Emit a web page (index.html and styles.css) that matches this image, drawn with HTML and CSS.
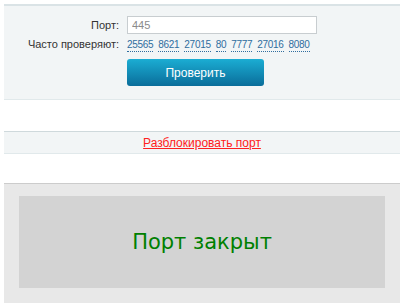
FILE: index.html
```html
<!DOCTYPE html>
<html>
<head>
<meta charset="utf-8">
<link rel="stylesheet" href="styles.css">
</head>
<body>
<div class="page">
  <section class="form-box">
    <div class="form-grid">
      <label class="lbl" for="port">Порт:</label>
      <input id="port" class="port-input" type="text" placeholder="445">
      <span class="lbl">Часто проверяют:</span>
      <div class="ports">
        <a class="port">25565</a>
        <a class="port">8621</a>
        <a class="port">27015</a>
        <a class="port">80</a>
        <a class="port">7777</a>
        <a class="port">27016</a>
        <a class="port">8080</a>
      </div>
      <span></span>
      <button class="check-btn">Проверить</button>
    </div>
  </section>
  <div class="unblock">
    <a class="unblock-link">Разблокировать порт</a>
  </div>
  <section class="result">
    <div class="result-inner">Порт закрыт</div>
  </section>
</div>
</body>
</html>
```

FILE: styles.css
```css
html, body {
  margin: 0;
  padding: 0;
  background: #ffffff;
}
body {
  font-family: "Liberation Sans", Arial, sans-serif;
  overflow: hidden;
}
.page {
  padding: 4px 0 0 4px;
}
.form-box {
  background: #f2f5f6;
  border-top: 2px solid #dae3e6;
  border-bottom: 1px solid #e1e9eb;
  padding: 10px 0 13px;
}
.form-grid {
  display: grid;
  grid-template-columns: 115px 190px;
  column-gap: 8px;
  align-items: center;
}
.lbl {
  text-align: right;
  font-size: 11px;
  color: #333333;
}
.port-input {
  box-sizing: border-box;
  height: 18px;
  width: 190px;
  margin: 0;
  border: 1px solid #c8cdd0;
  padding: 0 4px;
  font-family: "Liberation Sans", Arial, sans-serif;
  font-size: 11px;
  color: #333;
  background: #fff;
}
.port-input::placeholder {
  color: #8a8a8a;
}
.ports {
  display: flex;
  gap: 5px;
  margin-top: 3px;
  height: 16px;
  align-items: center;
}
.port {
  font-size: 10px;
  letter-spacing: -0.3px;
  color: #2f6d9e;
  border-bottom: 1px dotted #2f6d9e;
  line-height: 12px;
}
.check-btn {
  grid-column: 2;
  margin-top: 6px;
  width: 137px;
  height: 27px;
  border: none;
  border-radius: 3px;
  background: linear-gradient(#1badd3, #0a6d9a);
  color: #fff;
  font-family: "Liberation Sans", Arial, sans-serif;
  font-size: 12px;
  padding: 0;
}
.unblock {
  margin-top: 31px;
  background: #f2f5f6;
  border-top: 1px solid #cfd9dc;
  border-bottom: 1px solid #e1e9eb;
  height: 21px;
  display: flex;
  justify-content: center;
  align-items: center;
}
.unblock-link {
  color: #ff2020;
  font-size: 12px;
  text-decoration: underline;
}
.result {
  margin-top: 29px;
  background: #e8e8e8;
  border-top: 1px solid #cccccc;
  padding: 12px 15px 15px;
}
.result-inner {
  background: #d3d3d3;
  height: 92px;
  display: flex;
  align-items: center;
  justify-content: center;
  color: #008000;
  font-family: "DejaVu Sans", sans-serif;
  font-size: 21px;
}
```
